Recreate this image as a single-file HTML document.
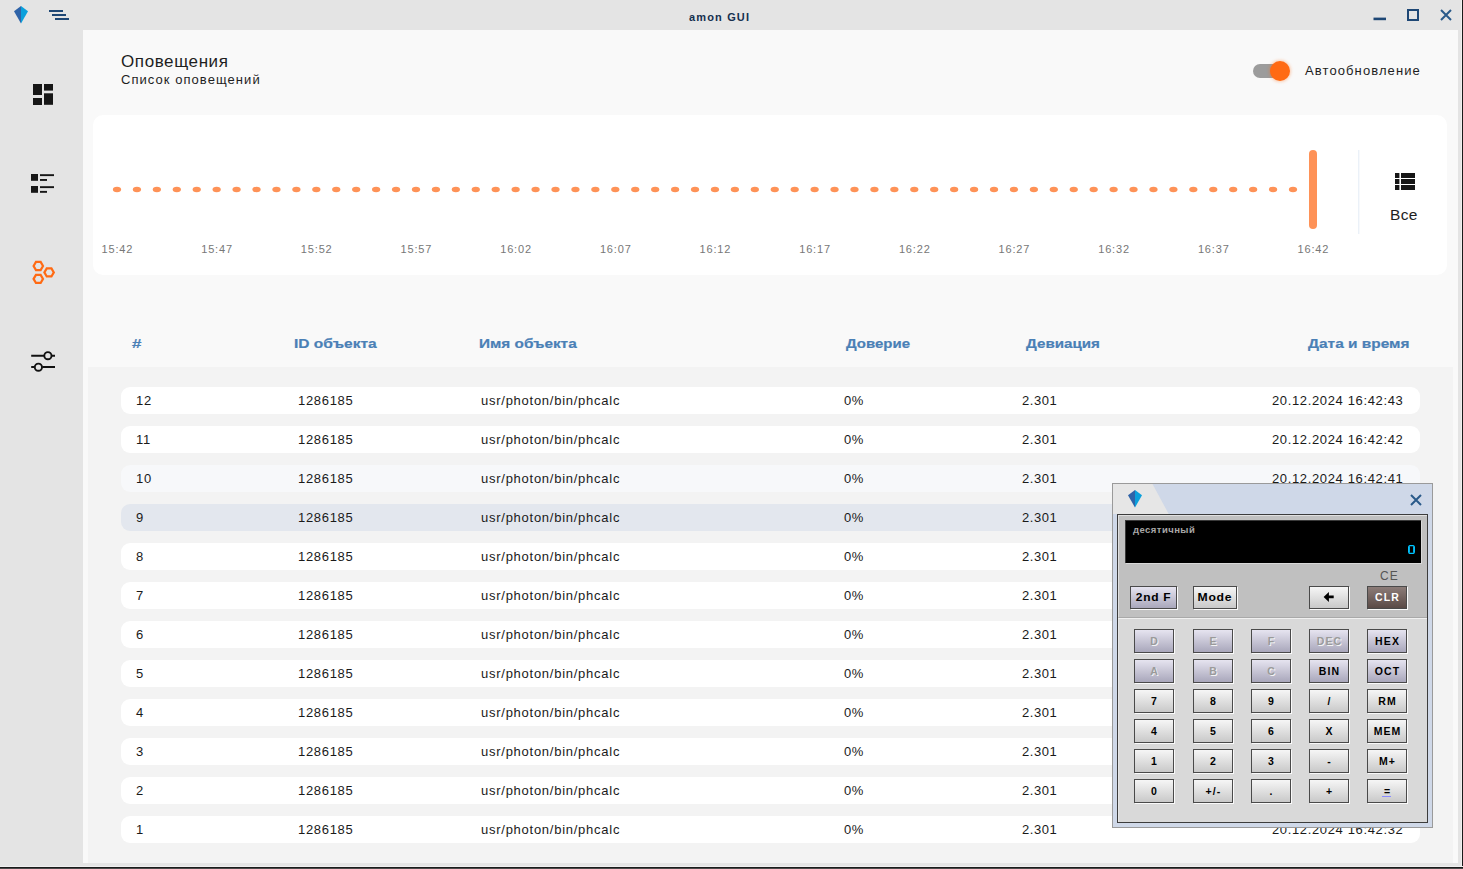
<!DOCTYPE html>
<html><head><meta charset="utf-8">
<style>
*{margin:0;padding:0;box-sizing:border-box}
html,body{width:1463px;height:869px;overflow:hidden;background:#e4e4e4;font-family:"Liberation Sans",sans-serif;color:#1a1a1a}
.a{position:absolute}
.t{position:absolute;white-space:nowrap;line-height:1}
#titlebar{left:0;top:0;width:1463px;height:30px;background:#e4e4e4}
#sidebar{left:0;top:30px;width:83px;height:836px;background:#e4e4e4}
#content{left:83px;top:30px;width:1375px;height:833px;background:#f9f9f9}
#rstrip{left:1458px;top:30px;width:4px;height:836px;background:#e4e4e4}
#rborder{left:1462px;top:0;width:1px;height:869px;background:#1a1a1a}
#bborder{left:0;top:866px;width:1463px;height:3px;background:#1a1a1a;border-top:1px solid #f0f0f0;border-bottom:1px solid #4a4a4a}
.card{left:93px;top:115px;width:1354px;height:160px;background:#fff;border-radius:10px}
.tbody{left:88px;top:367px;width:1365px;height:496px;background:#f3f3f3}
.row{position:absolute;left:121px;width:1299px;height:27px;background:#fff;border-radius:9px}
.hd{position:absolute;transform-origin:0 0;-webkit-text-stroke:0.2px #4a80b6;font-weight:bold;font-size:13px;color:#4a80b6;line-height:1;white-space:nowrap}
.cell{position:absolute;font-size:13px;color:#1a1a1a;line-height:1;white-space:nowrap}
.lbl{position:absolute;font-size:11px;color:#777;line-height:1;white-space:nowrap}

.cw{left:1112px;top:483px;width:321px;height:345px;background:#cfd8e8;border:1px solid #9a9a9a}
.cf{left:1117px;top:514px;width:311px;height:309px;border:1px solid #3c3c3c;background:#d9d9d9;box-shadow:inset 1px 1px 0 #e6e6e6}
.cup{left:1118px;top:515px;width:309px;height:103px;background:#c0c0c0;border-bottom:1px solid #a9a9a9;box-shadow:0 1px 0 #f0f0f0;border-top:1px solid #e0e0e0;border-left:1px solid #e0e0e0}
.disp{left:1125px;top:520px;width:296px;height:43px;background:#000;border-top:1px solid #3a3a3a;border-left:1px solid #3a3a3a;box-shadow:1px 1px 0 #d9d9d9}
.b{position:absolute;width:40px;height:24px;border:1px solid #4a4a4a;box-shadow:1px 1px 0 #fafafa;font-family:"Liberation Sans",sans-serif;font-weight:bold;font-size:10.5px;letter-spacing:1.1px;text-indent:1.1px;line-height:22px;text-align:center;color:#000;background:linear-gradient(#f6f6f6,#c9c9c9)}
.bl{background:linear-gradient(#e6e4f0,#a9a7bb)}
.dis{color:#9a9a9a;text-shadow:1px 1px 0 #f4f4f4}
</style></head><body>
<div id="titlebar" class="a"></div>
<div id="sidebar" class="a"></div>
<div id="content" class="a"></div>
<div id="rstrip" class="a"></div>
<div class="a" style="left:1461px;top:0;width:1px;height:867px;background:#f0f0f0"></div>
<div id="rborder" class="a"></div>
<div id="bborder" class="a"></div>

<!-- title bar icons -->
<svg class="a" style="left:0;top:0" width="100" height="30">
  <polygon points="21,6 14,11.3 21,23.6" fill="#2f63a8"/>
  <polygon points="21,6 28,11.3 21,23.6" fill="#0aa0dc"/>
  <rect x="49" y="10" width="14" height="2" fill="#1e4775"/>
  <rect x="52" y="14" width="14" height="2" fill="#1e4775"/>
  <rect x="55" y="18" width="14" height="2" fill="#1e4775"/>
</svg>
<div class="t" style="left:689px;top:12px;font-size:11px;font-weight:bold;color:#15304f;letter-spacing:1.15px">amon GUI</div>
<svg class="a" style="left:1360px;top:0" width="100" height="30">
  <rect x="13.5" y="17.6" width="12.5" height="2.6" fill="#1e4775"/>
  <rect x="48" y="10" width="10" height="10" fill="none" stroke="#1e4775" stroke-width="2"/>
  <path d="M81,10 L91,20 M91,10 L81,20" stroke="#2a5a8a" stroke-width="2"/>
</svg>


<!-- sidebar icons -->
<svg class="a" style="left:0;top:30px" width="83" height="400">
  <g fill="#161616" transform="translate(0,-30)">
    <rect x="33" y="84" width="9" height="11"/>
    <rect x="33" y="98" width="9" height="7"/>
    <rect x="44" y="84" width="9" height="6.6"/>
    <rect x="44" y="93.3" width="9" height="11.5"/>
    <rect x="31" y="174" width="7" height="6.8"/>
    <rect x="40" y="174.2" width="14" height="1.9"/>
    <rect x="40" y="179" width="7" height="1.9"/>
    <rect x="31" y="186" width="7" height="6.8"/>
    <rect x="40" y="186.2" width="14" height="1.9"/>
    <rect x="40" y="190.9" width="7" height="1.9"/>
  </g>
  <g fill="none" stroke="#ff6a13" stroke-width="2.2" transform="translate(0,-30)">
    <polygon points="33.60,266.00 35.95,261.93 40.65,261.93 43.00,266.00 40.65,270.07 35.95,270.07"/>
    <polygon points="44.40,272.40 46.75,268.33 51.45,268.33 53.80,272.40 51.45,276.47 46.75,276.47"/>
    <polygon points="33.60,278.90 35.95,274.83 40.65,274.83 43.00,278.90 40.65,282.97 35.95,282.97"/>
  </g>
  <g fill="none" stroke="#111" stroke-width="1.9" transform="translate(0,-30)">
    <path d="M31.2,355.7 H44 M51.8,355.7 H55"/>
    <circle cx="47.9" cy="355.7" r="3.6"/>
    <path d="M31.2,367 H35 M42.3,367 H55"/>
    <circle cx="38.4" cy="367.2" r="3.6"/>
  </g>
</svg>

<!-- page header -->
<div class="t" style="left:121px;top:52.6px;font-size:17px;letter-spacing:0.6px;color:#1e1e1e">Оповещения</div>
<div class="t" style="left:121px;top:73px;font-size:13px;letter-spacing:1.05px;color:#1e1e1e">Список оповещений</div>
<!-- toggle -->
<div class="a" style="left:1253px;top:64px;width:34px;height:14px;border-radius:7px;background:#9c9c9c"></div>
<div class="a" style="left:1270px;top:60.6px;width:20px;height:20px;border-radius:10px;background:#ff6a13;box-shadow:0 0 3px 1px rgba(255,106,19,0.3)"></div>
<div class="t" style="left:1305px;top:64px;font-size:13px;letter-spacing:1.1px;color:#1e1e1e">Автообновление</div>

<!-- chart card -->
<div class="a card"></div>
<svg class="a" style="left:0;top:0" width="1463" height="290">
  <g fill="#fe9257"><ellipse cx="117.00" cy="189.5" rx="4.1" ry="2.7"/><ellipse cx="136.93" cy="189.5" rx="4.1" ry="2.7"/><ellipse cx="156.86" cy="189.5" rx="4.1" ry="2.7"/><ellipse cx="176.80" cy="189.5" rx="4.1" ry="2.7"/><ellipse cx="196.73" cy="189.5" rx="4.1" ry="2.7"/><ellipse cx="216.66" cy="189.5" rx="4.1" ry="2.7"/><ellipse cx="236.59" cy="189.5" rx="4.1" ry="2.7"/><ellipse cx="256.53" cy="189.5" rx="4.1" ry="2.7"/><ellipse cx="276.46" cy="189.5" rx="4.1" ry="2.7"/><ellipse cx="296.39" cy="189.5" rx="4.1" ry="2.7"/><ellipse cx="316.32" cy="189.5" rx="4.1" ry="2.7"/><ellipse cx="336.25" cy="189.5" rx="4.1" ry="2.7"/><ellipse cx="356.19" cy="189.5" rx="4.1" ry="2.7"/><ellipse cx="376.12" cy="189.5" rx="4.1" ry="2.7"/><ellipse cx="396.05" cy="189.5" rx="4.1" ry="2.7"/><ellipse cx="415.98" cy="189.5" rx="4.1" ry="2.7"/><ellipse cx="435.92" cy="189.5" rx="4.1" ry="2.7"/><ellipse cx="455.85" cy="189.5" rx="4.1" ry="2.7"/><ellipse cx="475.78" cy="189.5" rx="4.1" ry="2.7"/><ellipse cx="495.71" cy="189.5" rx="4.1" ry="2.7"/><ellipse cx="515.64" cy="189.5" rx="4.1" ry="2.7"/><ellipse cx="535.58" cy="189.5" rx="4.1" ry="2.7"/><ellipse cx="555.51" cy="189.5" rx="4.1" ry="2.7"/><ellipse cx="575.44" cy="189.5" rx="4.1" ry="2.7"/><ellipse cx="595.37" cy="189.5" rx="4.1" ry="2.7"/><ellipse cx="615.31" cy="189.5" rx="4.1" ry="2.7"/><ellipse cx="635.24" cy="189.5" rx="4.1" ry="2.7"/><ellipse cx="655.17" cy="189.5" rx="4.1" ry="2.7"/><ellipse cx="675.10" cy="189.5" rx="4.1" ry="2.7"/><ellipse cx="695.03" cy="189.5" rx="4.1" ry="2.7"/><ellipse cx="714.97" cy="189.5" rx="4.1" ry="2.7"/><ellipse cx="734.90" cy="189.5" rx="4.1" ry="2.7"/><ellipse cx="754.83" cy="189.5" rx="4.1" ry="2.7"/><ellipse cx="774.76" cy="189.5" rx="4.1" ry="2.7"/><ellipse cx="794.69" cy="189.5" rx="4.1" ry="2.7"/><ellipse cx="814.63" cy="189.5" rx="4.1" ry="2.7"/><ellipse cx="834.56" cy="189.5" rx="4.1" ry="2.7"/><ellipse cx="854.49" cy="189.5" rx="4.1" ry="2.7"/><ellipse cx="874.42" cy="189.5" rx="4.1" ry="2.7"/><ellipse cx="894.36" cy="189.5" rx="4.1" ry="2.7"/><ellipse cx="914.29" cy="189.5" rx="4.1" ry="2.7"/><ellipse cx="934.22" cy="189.5" rx="4.1" ry="2.7"/><ellipse cx="954.15" cy="189.5" rx="4.1" ry="2.7"/><ellipse cx="974.08" cy="189.5" rx="4.1" ry="2.7"/><ellipse cx="994.02" cy="189.5" rx="4.1" ry="2.7"/><ellipse cx="1013.95" cy="189.5" rx="4.1" ry="2.7"/><ellipse cx="1033.88" cy="189.5" rx="4.1" ry="2.7"/><ellipse cx="1053.81" cy="189.5" rx="4.1" ry="2.7"/><ellipse cx="1073.75" cy="189.5" rx="4.1" ry="2.7"/><ellipse cx="1093.68" cy="189.5" rx="4.1" ry="2.7"/><ellipse cx="1113.61" cy="189.5" rx="4.1" ry="2.7"/><ellipse cx="1133.54" cy="189.5" rx="4.1" ry="2.7"/><ellipse cx="1153.47" cy="189.5" rx="4.1" ry="2.7"/><ellipse cx="1173.41" cy="189.5" rx="4.1" ry="2.7"/><ellipse cx="1193.34" cy="189.5" rx="4.1" ry="2.7"/><ellipse cx="1213.27" cy="189.5" rx="4.1" ry="2.7"/><ellipse cx="1233.20" cy="189.5" rx="4.1" ry="2.7"/><ellipse cx="1253.14" cy="189.5" rx="4.1" ry="2.7"/><ellipse cx="1273.07" cy="189.5" rx="4.1" ry="2.7"/><ellipse cx="1293.00" cy="189.5" rx="4.1" ry="2.7"/></g>
  <line x1="1313" y1="154" x2="1313" y2="225" stroke="#fe9257" stroke-width="8" stroke-linecap="round"/>
  <rect x="1358.3" y="150" width="1" height="84" fill="#e3ebf5"/>
  <g fill="#161616">
    <rect x="1395" y="173" width="4.4" height="5"/><rect x="1401" y="173" width="14" height="5"/>
    <rect x="1395" y="179" width="4.4" height="5"/><rect x="1401" y="179" width="14" height="5"/>
    <rect x="1395" y="185" width="4.4" height="5"/><rect x="1401" y="185" width="14" height="5"/>
  </g>
</svg>
<div class="t" style="left:1390px;top:206.5px;font-size:15.5px;letter-spacing:0.3px;color:#1e1e1e">Все</div>
<div class="lbl" style="left:101.5px;top:243.7px;letter-spacing:0.85px">15:42</div>
<div class="lbl" style="left:201.2px;top:243.7px;letter-spacing:0.85px">15:47</div>
<div class="lbl" style="left:300.8px;top:243.7px;letter-spacing:0.85px">15:52</div>
<div class="lbl" style="left:400.5px;top:243.7px;letter-spacing:0.85px">15:57</div>
<div class="lbl" style="left:500.2px;top:243.7px;letter-spacing:0.85px">16:02</div>
<div class="lbl" style="left:599.9px;top:243.7px;letter-spacing:0.85px">16:07</div>
<div class="lbl" style="left:699.5px;top:243.7px;letter-spacing:0.85px">16:12</div>
<div class="lbl" style="left:799.2px;top:243.7px;letter-spacing:0.85px">16:17</div>
<div class="lbl" style="left:898.9px;top:243.7px;letter-spacing:0.85px">16:22</div>
<div class="lbl" style="left:998.5px;top:243.7px;letter-spacing:0.85px">16:27</div>
<div class="lbl" style="left:1098.2px;top:243.7px;letter-spacing:0.85px">16:32</div>
<div class="lbl" style="left:1197.9px;top:243.7px;letter-spacing:0.85px">16:37</div>
<div class="lbl" style="left:1297.5px;top:243.7px;letter-spacing:0.85px">16:42</div>

<!-- table header -->
<div class="hd" style="left:131.7px;top:337px;transform:scaleX(1.3)">#</div>
<div class="hd" style="left:294.4px;top:337px;transform:scaleX(1.194)">ID объекта</div>
<div class="hd" style="left:479.3px;top:337px;transform:scaleX(1.18)">Имя объекта</div>
<div class="hd" style="left:845.7px;top:337px;transform:scaleX(1.151)">Доверие</div>
<div class="hd" style="left:1025.6px;top:337px;transform:scaleX(1.165)">Девиация</div>
<div class="hd" style="left:1307.8px;top:337px;transform:scaleX(1.187)">Дата и время</div>
<div class="a tbody"></div>
<div class="row" style="top:387px;background:#fff"></div>
<div class="cell" style="left:136px;top:394px;letter-spacing:0.7px">12</div>
<div class="cell" style="left:298px;top:394px;letter-spacing:0.68px">1286185</div>
<div class="cell" style="left:481px;top:394px;letter-spacing:0.74px">usr/photon/bin/phcalc</div>
<div class="cell" style="left:844px;top:394px;letter-spacing:0.6px">0%</div>
<div class="cell" style="left:1022px;top:394px;letter-spacing:0.54px">2.301</div>
<div class="cell" style="left:1272px;top:394px;letter-spacing:0.64px">20.12.2024 16:42:43</div>
<div class="row" style="top:426px;background:#fff"></div>
<div class="cell" style="left:136px;top:433px;letter-spacing:0.7px">11</div>
<div class="cell" style="left:298px;top:433px;letter-spacing:0.68px">1286185</div>
<div class="cell" style="left:481px;top:433px;letter-spacing:0.74px">usr/photon/bin/phcalc</div>
<div class="cell" style="left:844px;top:433px;letter-spacing:0.6px">0%</div>
<div class="cell" style="left:1022px;top:433px;letter-spacing:0.54px">2.301</div>
<div class="cell" style="left:1272px;top:433px;letter-spacing:0.64px">20.12.2024 16:42:42</div>
<div class="row" style="top:465px;background:#f7f8fa"></div>
<div class="cell" style="left:136px;top:472px;letter-spacing:0.7px">10</div>
<div class="cell" style="left:298px;top:472px;letter-spacing:0.68px">1286185</div>
<div class="cell" style="left:481px;top:472px;letter-spacing:0.74px">usr/photon/bin/phcalc</div>
<div class="cell" style="left:844px;top:472px;letter-spacing:0.6px">0%</div>
<div class="cell" style="left:1022px;top:472px;letter-spacing:0.54px">2.301</div>
<div class="cell" style="left:1272px;top:472px;letter-spacing:0.64px">20.12.2024 16:42:41</div>
<div class="row" style="top:504px;background:#e3e7ee"></div>
<div class="cell" style="left:136px;top:511px;letter-spacing:0.7px">9</div>
<div class="cell" style="left:298px;top:511px;letter-spacing:0.68px">1286185</div>
<div class="cell" style="left:481px;top:511px;letter-spacing:0.74px">usr/photon/bin/phcalc</div>
<div class="cell" style="left:844px;top:511px;letter-spacing:0.6px">0%</div>
<div class="cell" style="left:1022px;top:511px;letter-spacing:0.54px">2.301</div>
<div class="cell" style="left:1272px;top:511px;letter-spacing:0.64px">20.12.2024 16:42:40</div>
<div class="row" style="top:543px;background:#fff"></div>
<div class="cell" style="left:136px;top:550px;letter-spacing:0.7px">8</div>
<div class="cell" style="left:298px;top:550px;letter-spacing:0.68px">1286185</div>
<div class="cell" style="left:481px;top:550px;letter-spacing:0.74px">usr/photon/bin/phcalc</div>
<div class="cell" style="left:844px;top:550px;letter-spacing:0.6px">0%</div>
<div class="cell" style="left:1022px;top:550px;letter-spacing:0.54px">2.301</div>
<div class="cell" style="left:1272px;top:550px;letter-spacing:0.64px">20.12.2024 16:42:39</div>
<div class="row" style="top:582px;background:#fff"></div>
<div class="cell" style="left:136px;top:589px;letter-spacing:0.7px">7</div>
<div class="cell" style="left:298px;top:589px;letter-spacing:0.68px">1286185</div>
<div class="cell" style="left:481px;top:589px;letter-spacing:0.74px">usr/photon/bin/phcalc</div>
<div class="cell" style="left:844px;top:589px;letter-spacing:0.6px">0%</div>
<div class="cell" style="left:1022px;top:589px;letter-spacing:0.54px">2.301</div>
<div class="cell" style="left:1272px;top:589px;letter-spacing:0.64px">20.12.2024 16:42:38</div>
<div class="row" style="top:621px;background:#fff"></div>
<div class="cell" style="left:136px;top:628px;letter-spacing:0.7px">6</div>
<div class="cell" style="left:298px;top:628px;letter-spacing:0.68px">1286185</div>
<div class="cell" style="left:481px;top:628px;letter-spacing:0.74px">usr/photon/bin/phcalc</div>
<div class="cell" style="left:844px;top:628px;letter-spacing:0.6px">0%</div>
<div class="cell" style="left:1022px;top:628px;letter-spacing:0.54px">2.301</div>
<div class="cell" style="left:1272px;top:628px;letter-spacing:0.64px">20.12.2024 16:42:37</div>
<div class="row" style="top:660px;background:#fff"></div>
<div class="cell" style="left:136px;top:667px;letter-spacing:0.7px">5</div>
<div class="cell" style="left:298px;top:667px;letter-spacing:0.68px">1286185</div>
<div class="cell" style="left:481px;top:667px;letter-spacing:0.74px">usr/photon/bin/phcalc</div>
<div class="cell" style="left:844px;top:667px;letter-spacing:0.6px">0%</div>
<div class="cell" style="left:1022px;top:667px;letter-spacing:0.54px">2.301</div>
<div class="cell" style="left:1272px;top:667px;letter-spacing:0.64px">20.12.2024 16:42:36</div>
<div class="row" style="top:699px;background:#fff"></div>
<div class="cell" style="left:136px;top:706px;letter-spacing:0.7px">4</div>
<div class="cell" style="left:298px;top:706px;letter-spacing:0.68px">1286185</div>
<div class="cell" style="left:481px;top:706px;letter-spacing:0.74px">usr/photon/bin/phcalc</div>
<div class="cell" style="left:844px;top:706px;letter-spacing:0.6px">0%</div>
<div class="cell" style="left:1022px;top:706px;letter-spacing:0.54px">2.301</div>
<div class="cell" style="left:1272px;top:706px;letter-spacing:0.64px">20.12.2024 16:42:35</div>
<div class="row" style="top:738px;background:#fff"></div>
<div class="cell" style="left:136px;top:745px;letter-spacing:0.7px">3</div>
<div class="cell" style="left:298px;top:745px;letter-spacing:0.68px">1286185</div>
<div class="cell" style="left:481px;top:745px;letter-spacing:0.74px">usr/photon/bin/phcalc</div>
<div class="cell" style="left:844px;top:745px;letter-spacing:0.6px">0%</div>
<div class="cell" style="left:1022px;top:745px;letter-spacing:0.54px">2.301</div>
<div class="cell" style="left:1272px;top:745px;letter-spacing:0.64px">20.12.2024 16:42:34</div>
<div class="row" style="top:777px;background:#fff"></div>
<div class="cell" style="left:136px;top:784px;letter-spacing:0.7px">2</div>
<div class="cell" style="left:298px;top:784px;letter-spacing:0.68px">1286185</div>
<div class="cell" style="left:481px;top:784px;letter-spacing:0.74px">usr/photon/bin/phcalc</div>
<div class="cell" style="left:844px;top:784px;letter-spacing:0.6px">0%</div>
<div class="cell" style="left:1022px;top:784px;letter-spacing:0.54px">2.301</div>
<div class="cell" style="left:1272px;top:784px;letter-spacing:0.64px">20.12.2024 16:42:33</div>
<div class="row" style="top:816px;background:#fff"></div>
<div class="cell" style="left:136px;top:823px;letter-spacing:0.7px">1</div>
<div class="cell" style="left:298px;top:823px;letter-spacing:0.68px">1286185</div>
<div class="cell" style="left:481px;top:823px;letter-spacing:0.74px">usr/photon/bin/phcalc</div>
<div class="cell" style="left:844px;top:823px;letter-spacing:0.6px">0%</div>
<div class="cell" style="left:1022px;top:823px;letter-spacing:0.54px">2.301</div>
<div class="cell" style="left:1272px;top:823px;letter-spacing:0.64px">20.12.2024 16:42:32</div>

<!-- calculator -->
<div class="a cw"></div>
<svg class="a" style="left:1113px;top:484px" width="319" height="30">
  <polygon points="0,0 39.5,0 55.7,30 0,30" fill="#e6e6e6"/>
  <polygon points="22,6 15,11.2 22,23.6" fill="#2f63a8"/>
  <polygon points="22,6 29,11.2 22,23.6" fill="#0aa0dc"/>
  <path d="M298,11 L308,21 M308,11 L298,21" stroke="#2a5a8a" stroke-width="2"/>
</svg>
<div class="a cf"></div>
<div class="a cup"></div>
<div class="a disp"></div>
<div class="t" style="left:1133px;top:525.2px;font-size:9.5px;font-weight:bold;color:#a8a8a8;letter-spacing:0.45px">десятичный</div>
<svg class="a" style="left:1400px;top:540px" width="20" height="20">
  <rect x="8.9" y="5.6" width="5.2" height="7.8" rx="1" fill="none" stroke="#00c4ff" stroke-width="1.2"/><path d="M8.9,6.5 V12.5 M14.1,6.5 V12.5" stroke="#00c4ff" stroke-width="1.7"/>
</svg>
<div class="t" style="left:1380px;top:570px;font-size:12px;color:#555;letter-spacing:1px">CE</div>
<div class="b bl" style="left:1130px;top:586px;width:47px;height:23px;line-height:21px;letter-spacing:0.6px;text-indent:0"><span style="display:inline-block;transform:scaleX(1.14)">2nd F</span></div>
<div class="b" style="left:1193px;top:586px;width:44px;height:23px;line-height:21px;letter-spacing:0.6px;text-indent:0"><span style="display:inline-block;transform:scaleX(1.16)">Mode</span></div>
<div class="b" style="left:1309px;top:586px;height:23px;line-height:21px"><svg width="38" height="22" style="position:absolute;left:0;top:0"><path d="M13.6,9.9 L18.9,4.9 L18.9,8.5 L23.7,8.5 L23.7,11.2 L18.9,11.2 L18.9,15 Z" fill="#000"/></svg></div>
<div class="b" style="left:1367px;top:586px;height:23px;line-height:21px;color:#fff;background:linear-gradient(#8c7c78,#5a4a46)">CLR</div>
<div class="b bl dis" style="left:1134px;top:629px">D</div>
<div class="b bl dis" style="left:1193px;top:629px">E</div>
<div class="b bl dis" style="left:1251px;top:629px">F</div>
<div class="b bl dis" style="left:1309px;top:629px">DEC</div>
<div class="b bl" style="left:1367px;top:629px">HEX</div>
<div class="b bl dis" style="left:1134px;top:659px">A</div>
<div class="b bl dis" style="left:1193px;top:659px">B</div>
<div class="b bl dis" style="left:1251px;top:659px">C</div>
<div class="b bl" style="left:1309px;top:659px">BIN</div>
<div class="b bl" style="left:1367px;top:659px">OCT</div>
<div class="b " style="left:1134px;top:689px">7</div>
<div class="b " style="left:1193px;top:689px">8</div>
<div class="b " style="left:1251px;top:689px">9</div>
<div class="b " style="left:1309px;top:689px">/</div>
<div class="b " style="left:1367px;top:689px">RM</div>
<div class="b " style="left:1134px;top:719px">4</div>
<div class="b " style="left:1193px;top:719px">5</div>
<div class="b " style="left:1251px;top:719px">6</div>
<div class="b " style="left:1309px;top:719px">X</div>
<div class="b " style="left:1367px;top:719px">MEM</div>
<div class="b " style="left:1134px;top:749px">1</div>
<div class="b " style="left:1193px;top:749px">2</div>
<div class="b " style="left:1251px;top:749px">3</div>
<div class="b " style="left:1309px;top:749px">-</div>
<div class="b " style="left:1367px;top:749px">M+</div>
<div class="b " style="left:1134px;top:779px">0</div>
<div class="b " style="left:1193px;top:779px">+/-</div>
<div class="b " style="left:1251px;top:779px">.</div>
<div class="b " style="left:1309px;top:779px">+</div>
<div class="b " style="left:1367px;top:779px">=<i style="position:absolute;left:14px;top:16px;width:9px;height:1px;background:#8a8aff"></i></div>
</body></html>
